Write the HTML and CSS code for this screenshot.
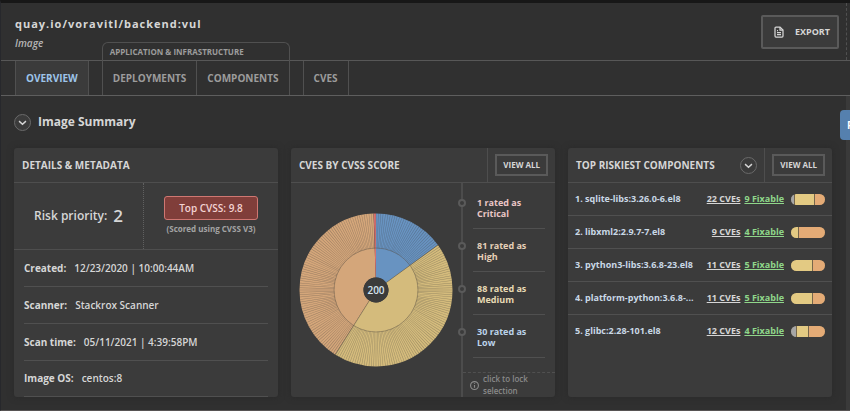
FILE: index.html
```html
<!DOCTYPE html>
<html lang="en">
<head>
<meta charset="utf-8">
<meta name="viewport" content="width=device-width, initial-scale=1">
<title>Image Summary</title>
<link rel="stylesheet" href="styles.css">
</head>
<body>
<div class="page">
  <header class="header">
    <div class="heading">
      <h1 class="name">quay.io/voravitl/backend:vul</h1>
      <p class="kind">Image</p>
    </div>
    <button class="export" type="button">
      <svg class="export-icon" viewBox="0 0 24 24" aria-hidden="true"><path d="M14 2H6a2 2 0 0 0-2 2v16a2 2 0 0 0 2 2h12a2 2 0 0 0 2-2V8z"/><path d="M14 2v6h6M8 9h2M8 13h8M8 17h8"/></svg>
      Export
    </button>
  </header>

  <nav class="tabs">
    <a class="tab tab-single tab-active" href="#overview">Overview</a>
    <div class="tab-group">
      <span class="group-label">Application &amp; Infrastructure</span>
      <div class="group-tabs">
        <a class="tab" href="#deployments">Deployments</a>
        <a class="tab" href="#components">Components</a>
      </div>
    </div>
    <a class="tab tab-single" href="#cves">CVEs</a>
  </nav>

  <main class="main">
    <section class="summary">
      <div class="summary-head">
        <button class="round" type="button" aria-label="Collapse section"><svg viewBox="0 0 16 16"><path d="M3 6l5 4.500 5-4.500"/></svg></button>
        <h2 class="summary-title">Image Summary</h2>
      </div>

      <div class="cards">
        <article class="card">
          <div class="card-head"><h3 class="card-title">Details &amp; Metadata</h3></div>
          <div class="risk">
            <div class="priority">Risk priority: <span class="priority-value">2</span></div>
            <div class="score">
              <span class="score-badge">Top CVSS: 9.8</span>
              <span class="score-note">(Scored using CVSS V3)</span>
            </div>
          </div>
          <dl class="facts">
            <div class="fact"><dt>Created:</dt><dd>12/23/2020 | 10:00:44AM</dd></div>
            <div class="fact"><dt>Scanner:</dt><dd>Stackrox Scanner</dd></div>
            <div class="fact"><dt>Scan time:</dt><dd>05/11/2021 | 4:39:58PM</dd></div>
            <div class="fact"><dt>Image OS:</dt><dd>centos:8</dd></div>
          </dl>
        </article>

        <article class="card">
          <div class="card-head">
            <h3 class="card-title">CVEs by CVSS Score</h3>
            <div class="card-action"><button class="view-all" type="button">View all</button></div>
          </div>
          <div class="cvss">
            <div class="chart">
              <svg class="sunburst" viewBox="-77 -77 154 154" role="img" aria-label="200 CVEs by severity">
                <g transform="rotate(-90)" fill="none">
                  <g stroke-width="64">
                    <circle class="s-low" r="44.500" pathLength="200" stroke-dasharray="30 170"/>
                    <circle class="s-medium" r="44.500" pathLength="200" stroke-dasharray="88 112" stroke-dashoffset="-30"/>
                    <circle class="s-high" r="44.500" pathLength="200" stroke-dasharray="81 119" stroke-dashoffset="-118"/>
                    <circle class="s-critical" r="44.500" pathLength="200" stroke-dasharray="1 199" stroke-dashoffset="-199"/>
                  </g>
                  <circle class="spokes" r="59" stroke-width="35" pathLength="200" stroke-dasharray=".24 .76" stroke-dashoffset=".12"/>
                  <circle class="ring-line" r="42"/>
                  <g class="ring-line"><path d="M7.300 10.100L45.300 62.300M-10.600 -6.600L-65.300 -40.800"/></g>
                </g>
                <circle class="hub" r="12.500"/>
                <text class="total" y="4" text-anchor="middle">200</text>
              </svg>
            </div>
            <div class="legend">
              <ul class="levels">
                <li class="level t-critical">1 rated as Critical</li>
                <li class="level t-high">81 rated as High</li>
                <li class="level t-medium">88 rated as Medium</li>
                <li class="level t-low">30 rated as Low</li>
              </ul>
              <div class="lock">
                <svg class="lock-icon" viewBox="0 0 16 16" aria-hidden="true"><circle cx="8" cy="8" r="7"/><path d="M8 7v5M8 4v1.500"/></svg>
                <span>click to lock selection</span>
              </div>
            </div>
          </div>
        </article>

        <article class="card">
          <div class="card-head">
            <h3 class="card-title">Top Riskiest Components</h3>
            <button class="round" type="button" aria-label="Choose ranking"><svg viewBox="0 0 16 16"><path d="M3 6l5 4.500 5-4.500"/></svg></button>
            <div class="card-action"><button class="view-all" type="button">View all</button></div>
          </div>
          <ol class="components">
            <li class="component"><span class="component-name">1. sqlite-libs:3.26.0-6.el8</span><a class="count" href="#c1">22 CVEs</a><a class="fixable" href="#f1">9 Fixable</a><span class="bar"><i class="b-low" style="flex-grow:2"></i><i class="b-medium" style="flex-grow:13"></i><i class="b-high" style="flex-grow:7"></i></span></li>
            <li class="component"><span class="component-name">2. libxml2:2.9.7-7.el8</span><a class="count" href="#c2">9 CVEs</a><a class="fixable" href="#f2">4 Fixable</a><span class="bar"><i class="b-medium" style="flex-grow:2"></i><i class="b-high" style="flex-grow:7"></i></span></li>
            <li class="component"><span class="component-name">3. python3-libs:3.6.8-23.el8</span><a class="count" href="#c3">11 CVEs</a><a class="fixable" href="#f3">5 Fixable</a><span class="bar"><i class="b-medium" style="flex-grow:7"></i><i class="b-high" style="flex-grow:4"></i></span></li>
            <li class="component"><span class="component-name">4. platform-python:3.6.8-...</span><a class="count" href="#c4">11 CVEs</a><a class="fixable" href="#f4">5 Fixable</a><span class="bar"><i class="b-medium" style="flex-grow:7"></i><i class="b-high" style="flex-grow:4"></i></span></li>
            <li class="component"><span class="component-name">5. glibc:2.28-101.el8</span><a class="count" href="#c5">12 CVEs</a><a class="fixable" href="#f5">4 Fixable</a><span class="bar"><i class="b-low" style="flex-grow:2"></i><i class="b-medium" style="flex-grow:4"></i><i class="b-high" style="flex-grow:6"></i></span></li>
          </ol>
        </article>
      </div>
    </section>
    <aside class="side"><button class="side-tab" type="button">F</button></aside>
  </main>
</div>
</body>
</html>
```
FILE: styles.css
```css
*, *::before { box-sizing: border-box; }

body {
  margin: 0;
  background: #303030;
  color: #d6d6d6;
  font-family: "Open Sans", "Noto Sans", sans-serif;
  font-size: 10px;
  font-weight: 600;
  line-height: 14px;
}

h1, h2, h3, p, ul, ol, dl, dd { margin: 0; padding: 0; }
ul, ol { list-style: none; }
a { color: inherit; text-decoration: none; }
button { font: inherit; color: inherit; padding: 0; cursor: pointer; }

.page {
  display: flex;
  flex-direction: column;
  min-height: 100vh;
  overflow: hidden;
  border-top: 3px solid #171717;
  border-left: 1px solid #27282c;
  border-bottom: 1px solid #575353;
}

/* Header */
.header {
  display: flex;
  justify-content: space-between;
  align-items: flex-start;
  margin-right: 3px;
  padding: 12px 7px 10px 14px;
  border-right: 1px dashed #505050;
}
.heading { display: flex; flex-direction: column; gap: 3px; }
.name {
  font-size: 11px;
  font-weight: 700;
  line-height: 18px;
  letter-spacing: 1px;
}
.kind { font-style: italic; line-height: 14px; color: #b5b5b5; }
.export {
  display: flex;
  align-items: center;
  gap: 10px;
  height: 34px;
  padding: 0 7px 0 10px;
  border: 2px solid #5a5a5a;
  border-radius: 2px;
  background: #3b3b3b;
  font-size: 9px;
  font-weight: 700;
  text-transform: uppercase;
}
.export-icon {
  width: 12px;
  height: 12px;
  fill: none;
  stroke: currentColor;
  stroke-width: 2.5;
}

/* Tabs */
.tabs {
  display: flex;
  align-items: flex-end;
  gap: 13px;
  padding-left: 14px;
  border-top: 1px solid #575757;
  border-bottom: 1px solid #5e5e5e;
  color: #9c9c9c;
  text-transform: uppercase;
}
.tab {
  display: block;
  padding: 10px;
  font-weight: 700;
}
.tab-single { border: 1px solid #505050; border-width: 0 1px; }
.tab-active { background: #3b3b3b; color: #9dc4ea; }
.tab-group {
  margin-top: -19px;
  border: 1px solid #505050;
  border-bottom: 0;
  border-radius: 6px 6px 0 0;
}
.group-label {
  display: block;
  padding: 2px 7px;
  font-size: 8px;
  font-weight: 700;
  line-height: 14px;
}
.group-tabs { display: flex; }
.group-tabs .tab + .tab { border-left: 1px solid #505050; }

/* Summary */
.main { display: flex; flex: 1; }
.summary { flex: 1; min-width: 0; padding: 16px 14px 13px 13px; }
.summary-head {
  display: flex;
  align-items: center;
  gap: 7px;
  padding-bottom: 16px;
}
.summary-title { font-size: 12px; line-height: 20px; font-weight: 700; }
.round {
  display: flex;
  flex: none;
  align-items: center;
  justify-content: center;
  width: 17px;
  height: 17px;
  border: 1px solid #6a6a6a;
  border-radius: 50%;
  background: #3b3b3b;
}
.round svg {
  width: 11px;
  height: 11px;
  fill: none;
  stroke: currentColor;
  stroke-width: 2;
}
.side { position: relative; width: 4px; background: #3a3a3a; }
.side-tab {
  position: absolute;
  top: 14px;
  left: -6px;
  width: 24px;
  height: 30px;
  padding-left: 7px;
  border: 0;
  border-radius: 4px;
  background: #5580ae;
  color: #fff;
  font-weight: 700;
  text-align: left;
}

/* Cards */
.cards {
  display: grid;
  grid-template-columns: repeat(3, minmax(0, 1fr));
  gap: 13px;
}
.card {
  overflow: hidden;
  display: flex;
  flex-direction: column;
  border-radius: 3px;
  background: #3b3b3b;
  box-shadow: 0 0 6px #292929;
}
.card-head {
  display: flex;
  align-items: center;
  height: 35px;
  border-bottom: 1px solid #4e4e4e;
}
.card-title {
  flex: 1;
  padding-left: 8px;
  font-size: 10px;
  font-weight: 700;
  text-transform: uppercase;
}
.card-action {
  display: flex;
  align-items: center;
  align-self: stretch;
  margin-left: 7px;
  padding: 0 7px;
  border-left: 1px solid #4e4e4e;
}
.view-all {
  height: 22px;
  padding: 0 6px;
  border: 2px solid #5a5a5a;
  background: transparent;
  font-size: 8px;
  font-weight: 700;
  text-transform: uppercase;
}

/* Details */
.risk {
  display: grid;
  grid-template-columns: 130px 1fr;
  height: 67px;
  border-bottom: 1px solid #4e4e4e;
}
.priority {
  display: flex;
  align-items: center;
  justify-content: center;
  gap: 6px;
  border-right: 1px dotted #606060;
  font-size: 12px;
}
.priority-value { font-size: 17px; }
.score {
  display: flex;
  flex-direction: column;
  align-items: center;
  justify-content: center;
  gap: 2px;
}
.score-badge {
  padding: 3px 14px;
  border: 1px solid #cf7772;
  border-radius: 3px;
  background: #803e3a;
  color: #f3d3d3;
  line-height: 16px;
}
.score-note { font-size: 8px; font-weight: 700; color: #a3a3a3; }
.facts { padding: 0 10px; }
.fact {
  display: flex;
  align-items: center;
  gap: 8px;
  padding: 11px 0 10px;
  border-bottom: 1px solid #505050;
  line-height: 15px;
}
.fact:last-child { padding: 10px 0; }
dt { font-weight: 700; }

/* Severity chart */
.cvss { display: flex; flex: 1; }
.chart {
  display: flex;
  flex: 1;
  align-items: center;
  justify-content: center;
}
.sunburst { width: 154px; height: 154px; }
.s-low { stroke: #6893c1; }
.s-medium { stroke: #d4bb7c; }
.s-high { stroke: #d4a67a; }
.s-critical { stroke: #d66f6f; }
.spokes { stroke: #3b3b3b; stroke-opacity: .4; }
.ring-line { stroke: #5a5044; stroke-opacity: .4; stroke-width: 1; }
.hub { fill: #3b3b3b; }
.total { fill: #d7e4f0; font-size: 10px; }
.legend {
  display: flex;
  flex-direction: column;
  width: 94px;
  border-left: 2px solid #4c4c4c;
}
.levels { flex: 1; padding: 3px 10px 0; }
.level {
  position: relative;
  padding: 11px 16px 9px 4px;
  border-bottom: 1px solid #505050;
  font-size: 9px;
  font-weight: 700;
  line-height: 11px;
}
.level::before {
  content: "";
  position: absolute;
  top: 13px;
  left: -15px;
  width: 8px;
  height: 8px;
  border: 2px solid #5a5a5a;
  border-radius: 50%;
  background: #3b3b3b;
}
.t-critical { color: #eac6c6; }
.t-high { color: #e6d0b8; }
.t-medium { color: #e8dab4; }
.t-low { color: #bcd3ea; }
.lock {
  display: flex;
  align-items: center;
  gap: 4px;
  padding: 0 7px;
  border-top: 1px dashed #505050;
  color: #8a8a8a;
  font-size: 8px;
  line-height: 12px;
}
.lock-icon {
  flex: none;
  width: 9px;
  height: 9px;
  fill: none;
  stroke: currentColor;
  stroke-width: 2;
}

/* Components */
.component {
  display: flex;
  align-items: center;
  padding: 9px 7px;
  border-bottom: 1px solid #505050;
  font-size: 9px;
  font-weight: 700;
}
.component:last-child { border-bottom: 0; }
.component-name {
  flex: 1;
  min-width: 0;
  overflow: hidden;
  text-overflow: ellipsis;
  white-space: nowrap;
  color: #c9d8e6;
}
.count { margin-right: 4px; text-decoration: underline; white-space: nowrap; }
.fixable { margin-right: 7px; color: #8fd68a; text-decoration: underline; white-space: nowrap; }
.bar {
  display: flex;
  flex: none;
  gap: 1px;
  width: 34px;
  height: 11px;
  overflow: hidden;
  border-radius: 6px;
  background: #75664b;
}
.bar i { flex: 1 1 0; }
.b-low { background: #a6a6a6; }
.b-medium { background: #e3ca83; }
.b-high { background: #e4ab76; }
```
